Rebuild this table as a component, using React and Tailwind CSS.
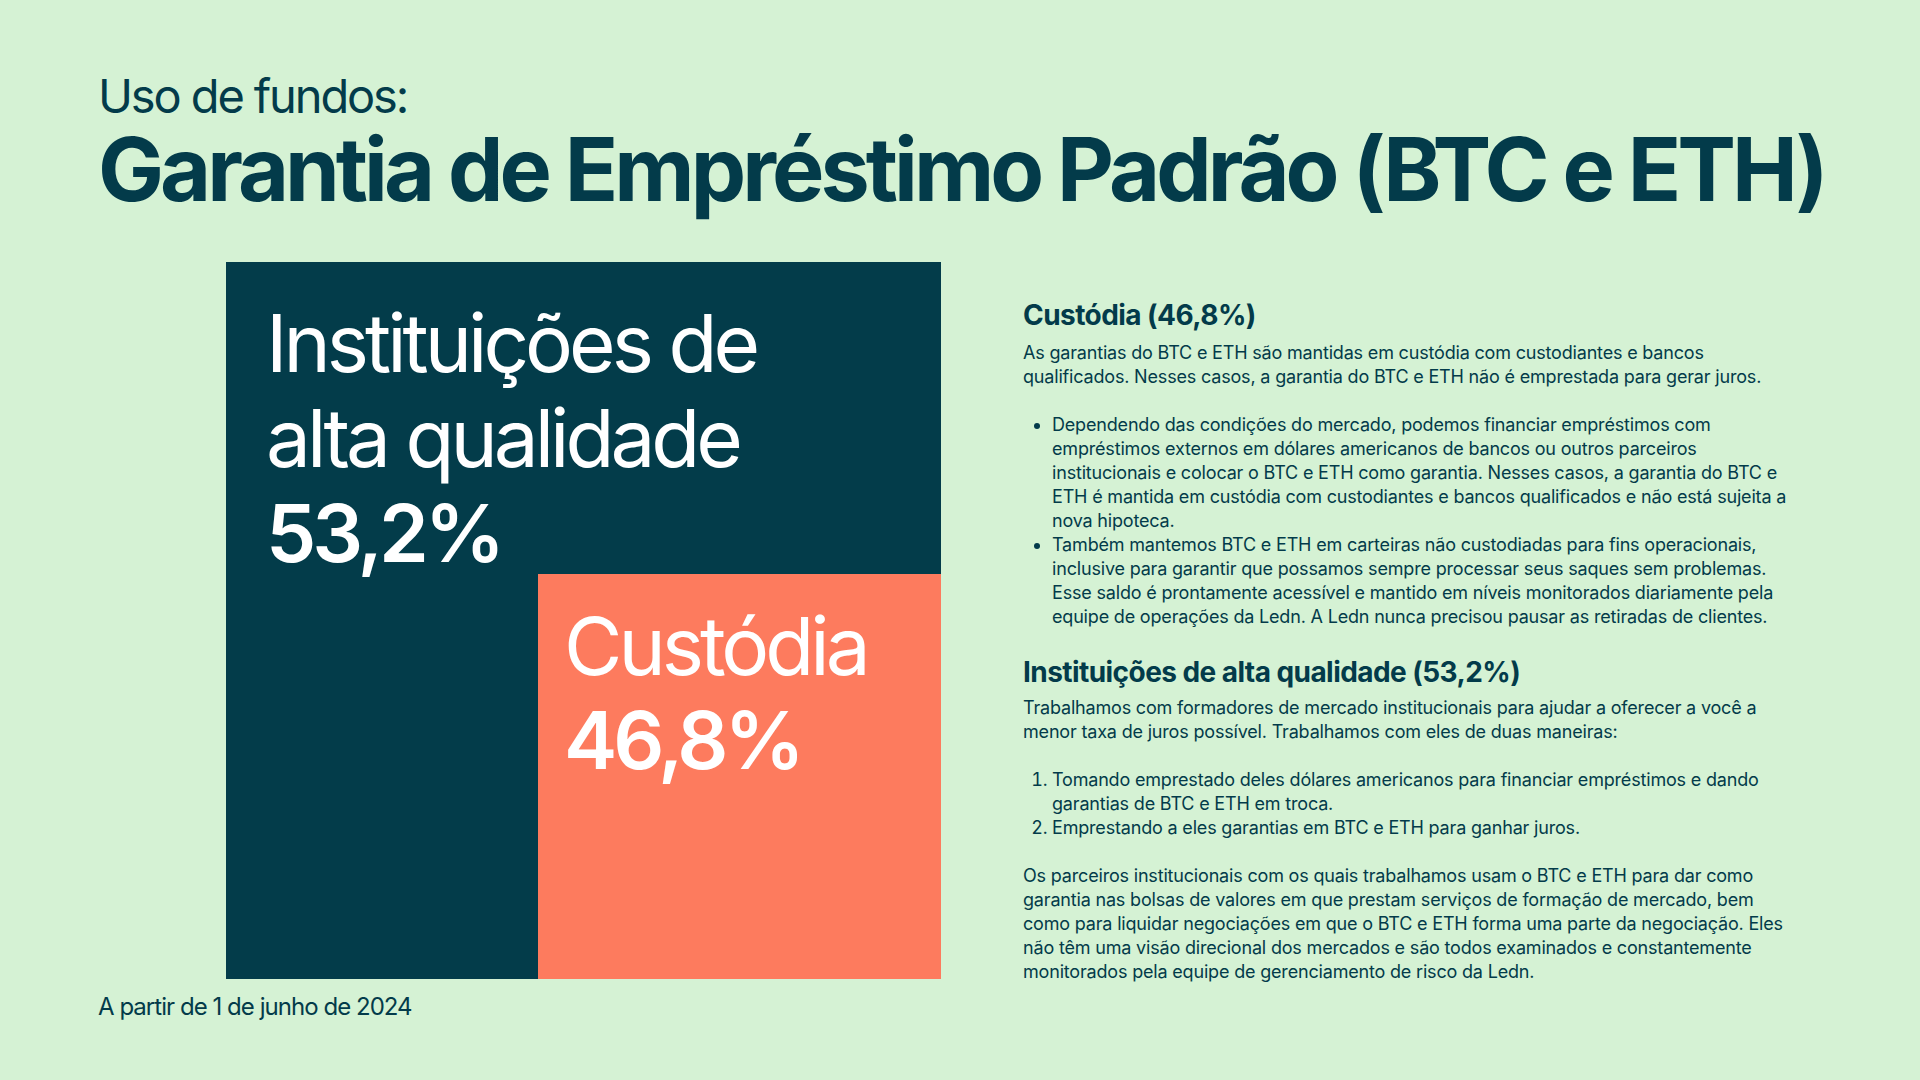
import React from "react";

const BULLETS = [
  "Dependendo das condições do mercado, podemos financiar empréstimos com empréstimos externos em dólares americanos de bancos ou outros parceiros institucionais e colocar o BTC e ETH como garantia. Nesses casos, a garantia do BTC e ETH é mantida em custódia com custodiantes e bancos qualificados e não está sujeita a nova hipoteca.",
  "Também mantemos BTC e ETH em carteiras não custodiadas para fins operacionais, inclusive para garantir que possamos sempre processar seus saques sem problemas. Esse saldo é prontamente acessível e mantido em níveis monitorados diariamente pela equipe de operações da Ledn. A Ledn nunca precisou pausar as retiradas de clientes.",
];

const STEPS = [
  "Tomando emprestado deles dólares americanos para financiar empréstimos e dando garantias de BTC e ETH em troca.",
  "Emprestando a eles garantias em BTC e ETH para ganhar juros.",
];

export default function App() {
  return (
    <div className="w-[1920px] h-[1080px] overflow-hidden bg-[#d5f2d4] text-[#033b4a] font-['Inter',sans-serif] px-[98px] pt-[72px]">
      <header>
        <p className="text-[47px] leading-[48px] tracking-[-0.045em] font-normal">Uso de fundos:</p>
        <h1 className="mt-[5px] text-[88px] leading-[88px] font-bold tracking-[-0.045em] whitespace-nowrap">
          Garantia de Empréstimo Padrão (BTC e ETH)
        </h1>
      </header>

      <div className="mt-[49px] flex">
        <div className="flex flex-col">
          {/* treemap: 53,2% / 46,8% */}
          <div className="ml-[128px] w-[715px] h-[717px] bg-[#033c4a] flex flex-col text-white">
            <div className="h-[312px] shrink-0 pl-[40px] pt-[33px] text-[80px] leading-[95px] tracking-[-0.05em]">
              <p>Instituições de</p>
              <p>alta qualidade</p>
              <p className="font-semibold">53,2%</p>
            </div>
            <div className="self-end shrink-0 w-[403px] h-[405px] bg-[#fd7b5e] pl-[26px] pt-[25px] text-[80px] leading-[94px] tracking-[-0.05em]">
              <p>Custódia</p>
              <p className="font-semibold">46,8%</p>
            </div>
          </div>
          <p className="mt-[13px] text-[24px] leading-[30px] tracking-[-0.04em]">A partir de 1 de junho de 2024</p>
        </div>

        <div className="ml-[82px] w-[768px] pt-[36px] text-[18px] leading-[24px] tracking-[-0.01em]">
          <h2 className="text-[28px] leading-[34px] font-bold tracking-[-0.02em]">Custódia (46,8%)</h2>
          <p className="mt-[9px]">
            As garantias do BTC e ETH são mantidas em custódia com custodiantes e bancos qualificados. Nesses casos, a garantia do BTC e ETH não é emprestada para gerar juros.
          </p>
          <ul className="mt-[24px] list-disc pl-[29px]">
            {BULLETS.map((b) => (
              <li key={b}>{b}</li>
            ))}
          </ul>

          <h2 className="mt-[26px] text-[28px] leading-[34px] font-bold tracking-[-0.02em]">
            Instituições de alta qualidade (53,2%)
          </h2>
          <p className="mt-[7px]">
            Trabalhamos com formadores de mercado institucionais para ajudar a oferecer a você a menor taxa de juros possível. Trabalhamos com eles de duas maneiras:
          </p>
          <ol className="mt-[24px] list-decimal pl-[29px]">
            {STEPS.map((s) => (
              <li key={s}>{s}</li>
            ))}
          </ol>
          <p className="mt-[24px]">
            Os parceiros institucionais com os quais trabalhamos usam o BTC e ETH para dar como garantia nas bolsas de valores em que prestam serviços de formação de mercado, bem como para liquidar negociações em que o BTC e ETH forma uma parte da negociação. Eles não têm uma visão direcional dos mercados e são todos examinados e constantemente monitorados pela equipe de gerenciamento de risco da Ledn.
          </p>
        </div>
      </div>
    </div>
  );
}
